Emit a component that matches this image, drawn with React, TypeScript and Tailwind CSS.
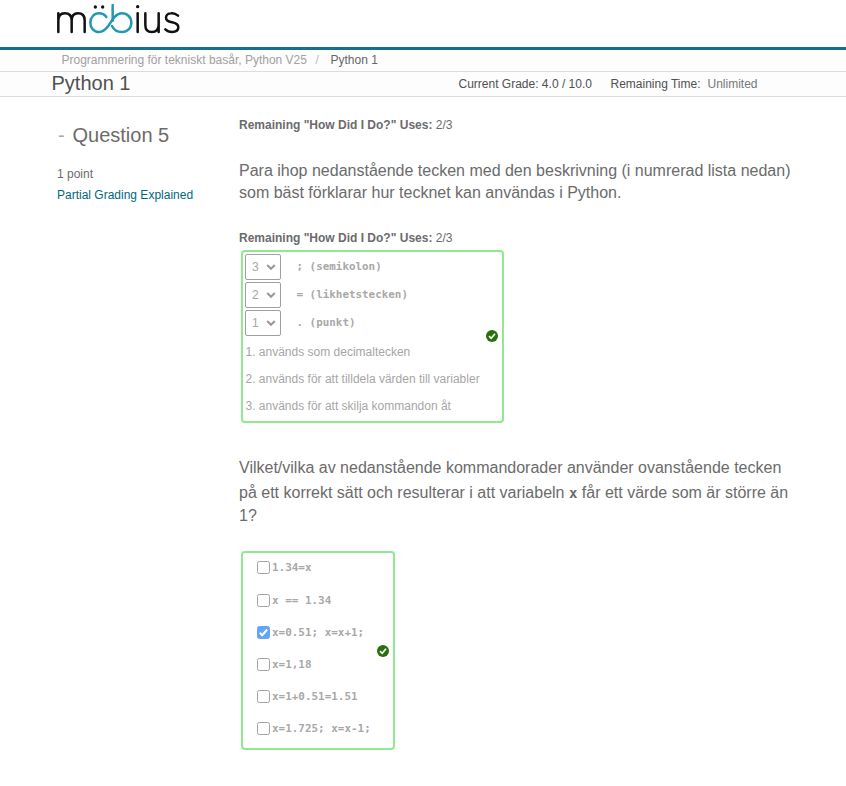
import React from "react";

const matches = [
  { value: "3", label: "; (semikolon)" },
  { value: "2", label: "= (likhetstecken)" },
  { value: "1", label: ". (punkt)" },
];

const descriptions = [
  "1. används som decimaltecken",
  "2. används för att tilldela värden till variabler",
  "3. används för att skilja kommandon åt",
];

const options = [
  { code: "1.34=x", checked: false },
  { code: "x == 1.34", checked: false },
  { code: "x=0.51; x=x+1;", checked: true },
  { code: "x=1,18", checked: false },
  { code: "x=1+0.51=1.51", checked: false },
  { code: "x=1.725; x=x-1;", checked: false },
];

function Logo() {
  return (
    <svg role="img" aria-label="möbius" className="block h-[40px] w-[128px]" viewBox="48 0 384 120" fill="none" strokeWidth="7.5" strokeLinecap="round">
      <g stroke="#111">
        <path d="M55 96V40M55 62C55 46 63 40 74 40C87 40 95 47 95 61V96M95 62C95 47 103 40 114 40C127 40 134 47 134 61V96" />
        <path d="M293 40V96" />
        <path d="M316 40V75C316 89 323 96 335 96C348 96 356 88 356 74M356 40V96" />
        <path d="M414 47C407 41 400 39 393 40C382 40 378 47 378 53C378 63 386 65 396 67C407 69 415 72 415 82C415 92 406 96 396 96C388 96 381 93 376 88" />
      </g>
      <g stroke="#2398b5">
        <path d="M199 51C193 43 185 40 177 40C162 40 151 52 151 68C151 84 162 96 177 96C193 96 200 84 207 75C216 61 226 40 246 40C262 40 274 52 274 68C274 84 262 96 246 96C232 96 221 89 216 78" />
        <path d="M218 15V62" />
      </g>
      <g fill="#111">
        <circle cx="166" cy="21" r="5" />
        <circle cx="188" cy="21" r="5" />
        <circle cx="293" cy="20" r="5" />
      </g>
    </svg>
  );
}

function CorrectMark() {
  return (
    <svg className="h-3 w-3 shrink-0" viewBox="0 0 12 12">
      <circle cx="6" cy="6" r="6" fill="#28700c" />
      <path d="M3 6.2 5.2 8.3 9 3.7" fill="none" stroke="#fff" strokeWidth="1.7" />
    </svg>
  );
}

function RemainingUses() {
  return (
    <p className="text-xs leading-4">
      <b>Remaining "How Did I Do?" Uses:</b> 2/3
    </p>
  );
}

export default function App() {
  return (
    <div className="h-[786px] w-[846px] overflow-hidden bg-white font-['Liberation_Sans',Arial,sans-serif] text-[#6b6b6b]">
      <header className="h-[50px] border-b-[3px] border-[#15708a] pl-[56px]">
        <Logo />
      </header>
      <nav className="flex h-[22px] items-center border-b border-[#dcdcdc] bg-[#fdfdfd] pb-px pl-[61.5px] text-xs leading-4 text-[#a3a09e]">
        <span className="w-[254px] whitespace-nowrap">Programmering för tekniskt basår, Python V25</span>
        <span className="w-[15px] text-[#bbb]">/</span>
        <span className="text-[#666]">Python 1</span>
      </nav>
      <div className="flex h-[25px] items-center border-b border-[#dcdcdc] bg-[#fdfdfd] pl-[51.5px] text-xs text-[#505050]">
        <h1 className="w-[407px] pb-[2px] text-xl leading-[22px]">Python 1</h1>
        <span className="w-[152px]">Current Grade: 4.0 / 10.0</span>
        <span className="w-[97px]">Remaining Time:</span>
        <span className="text-[#777]">Unlimited</span>
      </div>

      <main className="flex">
        <aside className="w-[239px] pl-[57px] pt-[26px]">
          <h2 className="flex h-6 items-center text-xl leading-6">
            <span className="w-[15.5px] pl-px text-[#aaa]">-</span>Question 5
          </h2>
          <p className="mt-[19px] text-xs leading-4">1 point</p>
          <a className="mt-[5px] block text-xs leading-4 text-[#00687f]">Partial Grading Explained</a>
        </aside>

        <section className="w-[570px] pt-5">
          <RemainingUses />
          <p className="mt-[27px] text-base leading-[22px]">
            Para ihop nedanstående tecken med den beskrivning (i numrerad lista nedan)<br />
            som bäst förklarar hur tecknet kan användas i Python.
          </p>
          <div className="mt-[26px]"><RemainingUses /></div>

          <div className="ml-[2px] mt-[4px] flex h-[173px] w-[263px] items-center justify-between rounded-[4px] border-2 border-[#90e890] pl-[2px] pr-[4px] text-[#a6a6a6]">
            <div className="h-full pt-[2px]">
              {matches.map((m) => (
                <div key={m.value} className="mb-[2px] flex h-[26px] items-center">
                  <div className="flex h-[26px] w-[36px] items-center justify-between rounded-[2px] border border-[#a0a0a0] pl-[6px] pr-[4px] text-xs">
                    {m.value}
                    <svg className="h-2.5 w-2.5" viewBox="0 0 10 10" fill="none" stroke="#999" strokeWidth="2">
                      <path d="M1.2 3 5 6.8 8.8 3" />
                    </svg>
                  </div>
                  <code className="ml-[15.5px] whitespace-pre font-['DejaVu_Sans_Mono',monospace] text-[10.9px] font-bold leading-4 text-[#a8a8a8]">{m.label}</code>
                </div>
              ))}
              <div className="pl-[0.5px] pt-px text-xs leading-[27px]">
                {descriptions.map((d) => <p key={d} className="whitespace-nowrap">{d}</p>)}
              </div>
            </div>
            <div className="pb-[2px]"><CorrectMark /></div>
          </div>

          <p className="mt-[33px] text-base leading-6">
            <span className="block h-[25px]">Vilket/vilka av nedanstående kommandorader använder ovanstående tecken</span>
            <span className="block h-[23px]">
              på ett korrekt sätt och resulterar i att variabeln <code className="font-['DejaVu_Sans_Mono',monospace] text-[14px] font-bold leading-none">x</code> får ett värde som är större än
            </span>
            <span className="block h-6">1?</span>
          </p>

          <div className="ml-[2px] mt-[23px] flex h-[199px] w-[154px] items-center justify-between rounded-[4px] border-2 border-[#90e890] pl-[14px] pr-[4px] text-[#a8a8a8]">
            <div className="flex h-full flex-col">
              {options.map((o, i) => (
                <div key={o.code} className={i === 0 ? "flex h-[31px] items-center pb-[2px]" : "flex h-[32px] items-center"}>
                  <svg className="h-[13px] w-[13px] shrink-0" viewBox="0 0 13 13" fill="none">
                    <rect x=".5" y=".5" width="12" height="12" rx="2" fill={o.checked ? "#61a6f8" : "#fff"} stroke={o.checked ? "#61a6f8" : "#a0a0a0"} />
                    {o.checked && <path d="M2.8 6.8 5.2 9.2 10.2 3.5" stroke="#fff" strokeWidth="2" />}
                  </svg>
                  <code className="ml-[2px] whitespace-pre pt-px font-['DejaVu_Sans_Mono',monospace] text-[10.95px] font-bold leading-4">{o.code}</code>
                </div>
              ))}
            </div>
            <CorrectMark />
          </div>
        </section>
      </main>
    </div>
  );
}
